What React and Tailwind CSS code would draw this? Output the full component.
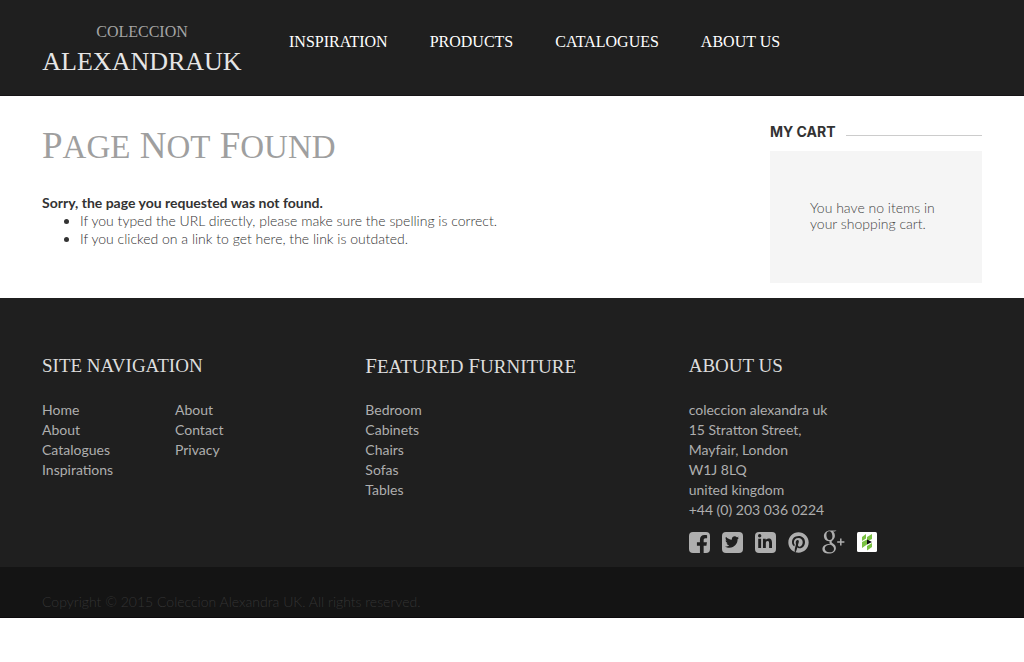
import React from "react";
import { FaFacebookF, FaTwitter, FaLinkedinIn, FaPinterest } from "react-icons/fa";

const serif = "font-['Liberation_Serif',serif]";

const navItems = ["Inspiration", "Products", "Catalogues", "About us"];
const siteLinks = ["Home", "About", "Catalogues", "Inspirations"];
const moreLinks = ["About", "Contact", "Privacy"];
const furniture = ["Bedroom", "Cabinets", "Chairs", "Sofas", "Tables"];
const address = [
  "coleccion alexandra uk",
  "15 Stratton Street,",
  "Mayfair, London",
  "W1J 8LQ",
  "united kingdom",
  "+44 (0) 203 036 0224",
];

function GooglePlusIcon() {
  return (
    <svg viewBox="0 0 24 24" className="size-6" aria-hidden="true">
      <path
        fill="currentColor"
        fillRule="evenodd"
        d="M15.6 .4H9.2C5.2 .4 2.9 3 2.9 6C2.9 9 5 11.2 8 11.2H8.7C8.3 12 8.4 12.9 9.1 13.7C4.4 13.8 1.4 16 1.4 18.9C1.4 21.8 4.2 23.6 7.8 23.6C12.1 23.6 14.9 21.2 14.9 18.2C14.9 16.1 13.9 14.9 12 13.5C10.8 12.6 10.6 12.3 10.6 11.7C10.6 11 11.2 10.6 12 9.9C13.2 8.9 13.9 7.6 13.9 5.8C13.9 4 13.2 2.7 12 1.6H13.8ZM8.2 1.3C10.4 1.3 11.4 4 11.4 6.6C11.4 9 10.3 10.1 8.8 10.1C6.6 10.1 5.4 7.4 5.4 4.9C5.4 2.8 6.4 1.3 8.2 1.3ZM9.7 14.7C12 16.3 13 17 13 18.9C13 21 11.4 22.3 8.6 22.3C5.7 22.3 3.8 20.9 3.8 18.6C3.8 16.1 6.2 14.7 9.7 14.7Z"
      />
      <path d="M19.8 8.4V15.6M16.2 12H23.4" stroke="currentColor" strokeWidth="1.5" />
    </svg>
  );
}

function HouzzIcon() {
  return (
    <svg viewBox="0 0 20 20" className="size-5" aria-hidden="true">
      <rect width="20" height="20" rx="1.5" fill="#fff" />
      <path d="M5 5L9 2V6.5L5 9ZM5 10L10 7.5V12.5L5 16ZM10 5L15 2V7L10 9.5ZM10 14L15 11V15L10 18.5Z" fill="#7ac142" />
      <path d="M10 7.5L15 10L10 12.5Z" fill="#111" />
    </svg>
  );
}

function Tile({ children, align = "items-center justify-center" }) {
  return (
    <span className={`flex size-[21px] overflow-hidden rounded-[4px] bg-[#aeaeae] text-[#1f1f1f] ${align}`}>
      {children}
    </span>
  );
}

const social = [
  ["Facebook", <Tile align="items-end justify-end pr-[2px]"><FaFacebookF className="-mb-px h-[19px] w-3" /></Tile>],
  ["Twitter", <Tile><FaTwitter className="size-[14px]" /></Tile>],
  ["LinkedIn", <Tile><FaLinkedinIn className="size-4" /></Tile>],
  ["Pinterest", <FaPinterest className="size-[21px]" />],
  ["Google Plus", <GooglePlusIcon />],
  ["Houzz", <HouzzIcon />],
];

function LinkList({ items }) {
  return (
    <ul>
      {items.map((t) => (
        <li key={t}><a href="#">{t}</a></li>
      ))}
    </ul>
  );
}

function FooterTitle({ children }) {
  return <h2 className={`${serif} mb-[22px] h-6 text-[19px] leading-6 text-[#dddddd]`}>{children}</h2>;
}

export default function App() {
  return (
    <div className="bg-white font-[Lato,sans-serif] text-sm text-[#333333]">
      <header className="flex h-24 items-start border-b border-[#161416] bg-[#1f1f1f] px-[42px]">
        <a href="#" className={`${serif} mt-5 flex w-[200px] flex-col items-center whitespace-nowrap`}>
          <span className="text-base leading-6 text-[#a5a5a5]">COLECCION</span>
          <span className="text-[26px] leading-9 text-[#e6e6e6]">ALEXANDRAUK</span>
        </a>
        <nav className="mt-[30px] ml-[47px]">
          <ul className={`${serif} flex gap-[42px] text-base leading-6 text-white uppercase`}>
            {navItems.map((t) => (
              <li key={t}><a href="#">{t}</a></li>
            ))}
          </ul>
        </nav>
      </header>

      <div className="flex px-[42px] pb-[15px]">
        <main className="min-w-0 flex-1 pt-7">
          <h1 className={`${serif} mb-[25px] text-[37px] leading-[44px] text-[#9f9f9f]`}>
            {["Page", "Not", "Found"].map((w, i) => (
              <React.Fragment key={w}>
                {i > 0 && " "}
                <span className="inline-block text-[33px] uppercase first-letter:text-[37px]">{w}</span>
              </React.Fragment>
            ))}
          </h1>
          <p className="leading-[18px] font-bold">Sorry, the page you requested was not found.</p>
          <ul className="list-disc pl-[38px] leading-[18px] font-light">
            <li>If you typed the URL directly, please make sure the spelling is correct.</li>
            <li>If you clicked on a link to get here, the link is outdated.</li>
          </ul>
        </main>
        <aside className="w-[212px] pt-6">
          <h2 className="flex items-center gap-[10px] font-[Inter,sans-serif] text-sm leading-6 font-bold">
            MY CART
            <span className="mt-[7px] flex-1 border-t border-[#cccccc]" />
          </h2>
          <div className="mt-[7px] bg-[#f5f5f5] px-10 pt-[49px] pb-[51px]">
            <p className="leading-4 font-light text-[#444444]">You have no items in your shopping cart.</p>
          </div>
        </aside>
      </div>

      <footer className="bg-[#1f1f1f] leading-5 text-[#aeaeae]">
        <div className="grid grid-cols-3 gap-[30px] px-[42px] pt-14 pb-[13px]">
          <section>
            <FooterTitle>SITE NAVIGATION</FooterTitle>
            <div className="grid grid-cols-[133px_1fr]">
              <LinkList items={siteLinks} />
              <LinkList items={moreLinks} />
            </div>
          </section>
          <section>
            <FooterTitle>
              {["Featured", "Furniture"].map((w, i) => (
                <React.Fragment key={w}>
                  {i > 0 && " "}
                  <span className="inline-block uppercase first-letter:text-[21px]">{w}</span>
                </React.Fragment>
              ))}
            </FooterTitle>
            <LinkList items={furniture} />
          </section>
          <section>
            <FooterTitle>ABOUT US</FooterTitle>
            <address className="not-italic">
              {address.map((t) => (
                <p key={t}>{t}</p>
              ))}
            </address>
            <div className="mt-[10px] flex items-center gap-3">
              {social.map(([name, icon]) => (
                <a key={name} href="#" aria-label={name}>{icon}</a>
              ))}
            </div>
          </section>
        </div>
        <div className="border-b border-[#0c0a0c] bg-[#141414] px-[42px] pt-[25px] pb-[5px] font-light text-[#333333]">
          Copyright © 2015 Coleccion Alexandra UK. All rights reserved.
        </div>
      </footer>
    </div>
  );
}
